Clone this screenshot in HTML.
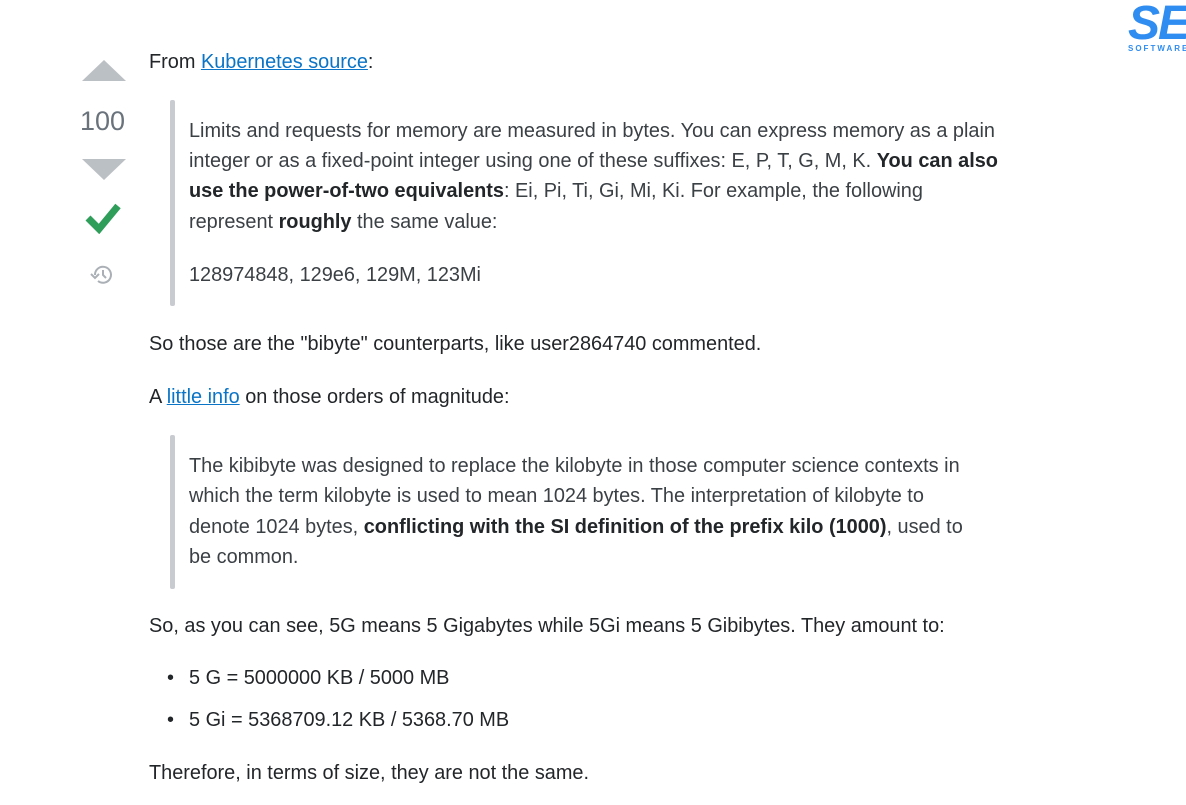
<!DOCTYPE html>
<html><head><meta charset="utf-8"><style>
body{margin:0;width:1186px;height:805px;background:#fff;position:relative;overflow:hidden;font-family:"Liberation Sans",sans-serif;font-size:19.9px;color:#232629}
.l{position:absolute;white-space:nowrap;line-height:24px}
.q{color:#3b4045}
a{color:#0a74c6;text-decoration:underline}
b{font-weight:bold}
.bar{position:absolute;left:170px;width:5px;background:#c8ccd0;border-radius:2px}
</style></head><body>
<svg style="position:absolute;left:82px;top:60px" width="44" height="22"><polygon points="22,0 44,21 0,21" fill="#bbc0c4"/></svg>
<div class="l" style="left:80px;top:106px;font-size:27px;line-height:30px;color:#6a737c">100</div>
<svg style="position:absolute;left:82px;top:159px" width="44" height="22"><polygon points="0,0 44,0 22,21" fill="#bbc0c4"/></svg>
<svg style="position:absolute;left:85px;top:200px" width="36" height="34"><path d="M3,18 L14,29 L33,6" stroke="#2f9e5a" stroke-width="7" fill="none"/></svg>
<svg style="position:absolute;left:89px;top:263px" width="26" height="24" viewBox="0 0 26 24"><path d="M6,12 A8,8 0 1 1 9,18" stroke="#aab0b6" stroke-width="2" fill="none"/><path d="M2,11 L6,15 L10,11" stroke="#aab0b6" stroke-width="2" fill="none"/><path d="M14,7 V12 L17,15" stroke="#aab0b6" stroke-width="2" fill="none"/></svg>

<div style="position:absolute;left:1128px;top:2px;width:58px;height:40px;overflow:hidden">
<div style="font-family:'Liberation Sans';font-weight:bold;font-size:48px;line-height:44px;color:#2f8cf0;letter-spacing:-2px;font-style:italic">SE</div></div>
<div style="position:absolute;left:1128px;top:44px;width:58px;overflow:hidden;white-space:nowrap;font-size:8px;line-height:10px;letter-spacing:2px;color:#2f8cf0;font-weight:bold">SOFTWARE</div>

<div class="l" style="left:149px;top:50px">From <a>Kubernetes source</a>:</div>
<div class="bar" style="top:100px;height:206px"></div>
<div class="l q" style="left:189px;top:119px">Limits and requests for memory are measured in bytes. You can express memory as a plain</div>
<div class="l q" style="left:189px;top:149px">integer or as a fixed-point integer using one of these suffixes: E, P, T, G, M, K. <b style="color:#232629">You can also</b></div>
<div class="l q" style="left:189px;top:179px"><b style="color:#232629">use the power-of-two equivalents</b>: Ei, Pi, Ti, Gi, Mi, Ki. For example, the following</div>
<div class="l q" style="left:189px;top:210px">represent <b style="color:#232629">roughly</b> the same value:</div>
<div class="l q" style="left:189px;top:263px">128974848, 129e6, 129M, 123Mi</div>
<div class="l" style="left:149px;top:332px">So those are the "bibyte" counterparts, like user2864740 commented.</div>
<div class="l" style="left:149px;top:385px">A <a>little info</a> on those orders of magnitude:</div>
<div class="bar" style="top:435px;height:154px"></div>
<div class="l q" style="left:189px;top:454px">The kibibyte was designed to replace the kilobyte in those computer science contexts in</div>
<div class="l q" style="left:189px;top:484px">which the term kilobyte is used to mean 1024 bytes. The interpretation of kilobyte to</div>
<div class="l q" style="left:189px;top:515px">denote 1024 bytes, <b style="color:#232629">conflicting with the SI definition of the prefix kilo (1000)</b>, used to</div>
<div class="l q" style="left:189px;top:545px">be common.</div>
<div class="l" style="left:149px;top:614px">So, as you can see, 5G means 5 Gigabytes while 5Gi means 5 Gibibytes. They amount to:</div>
<div class="l" style="left:167px;top:666px">•</div><div class="l" style="left:189px;top:666px">5 G = 5000000 KB / 5000 MB</div>
<div class="l" style="left:167px;top:708px">•</div><div class="l" style="left:189px;top:708px">5 Gi = 5368709.12 KB / 5368.70 MB</div>
<div class="l" style="left:149px;top:761px">Therefore, in terms of size, they are not the same.</div>
</body></html>
